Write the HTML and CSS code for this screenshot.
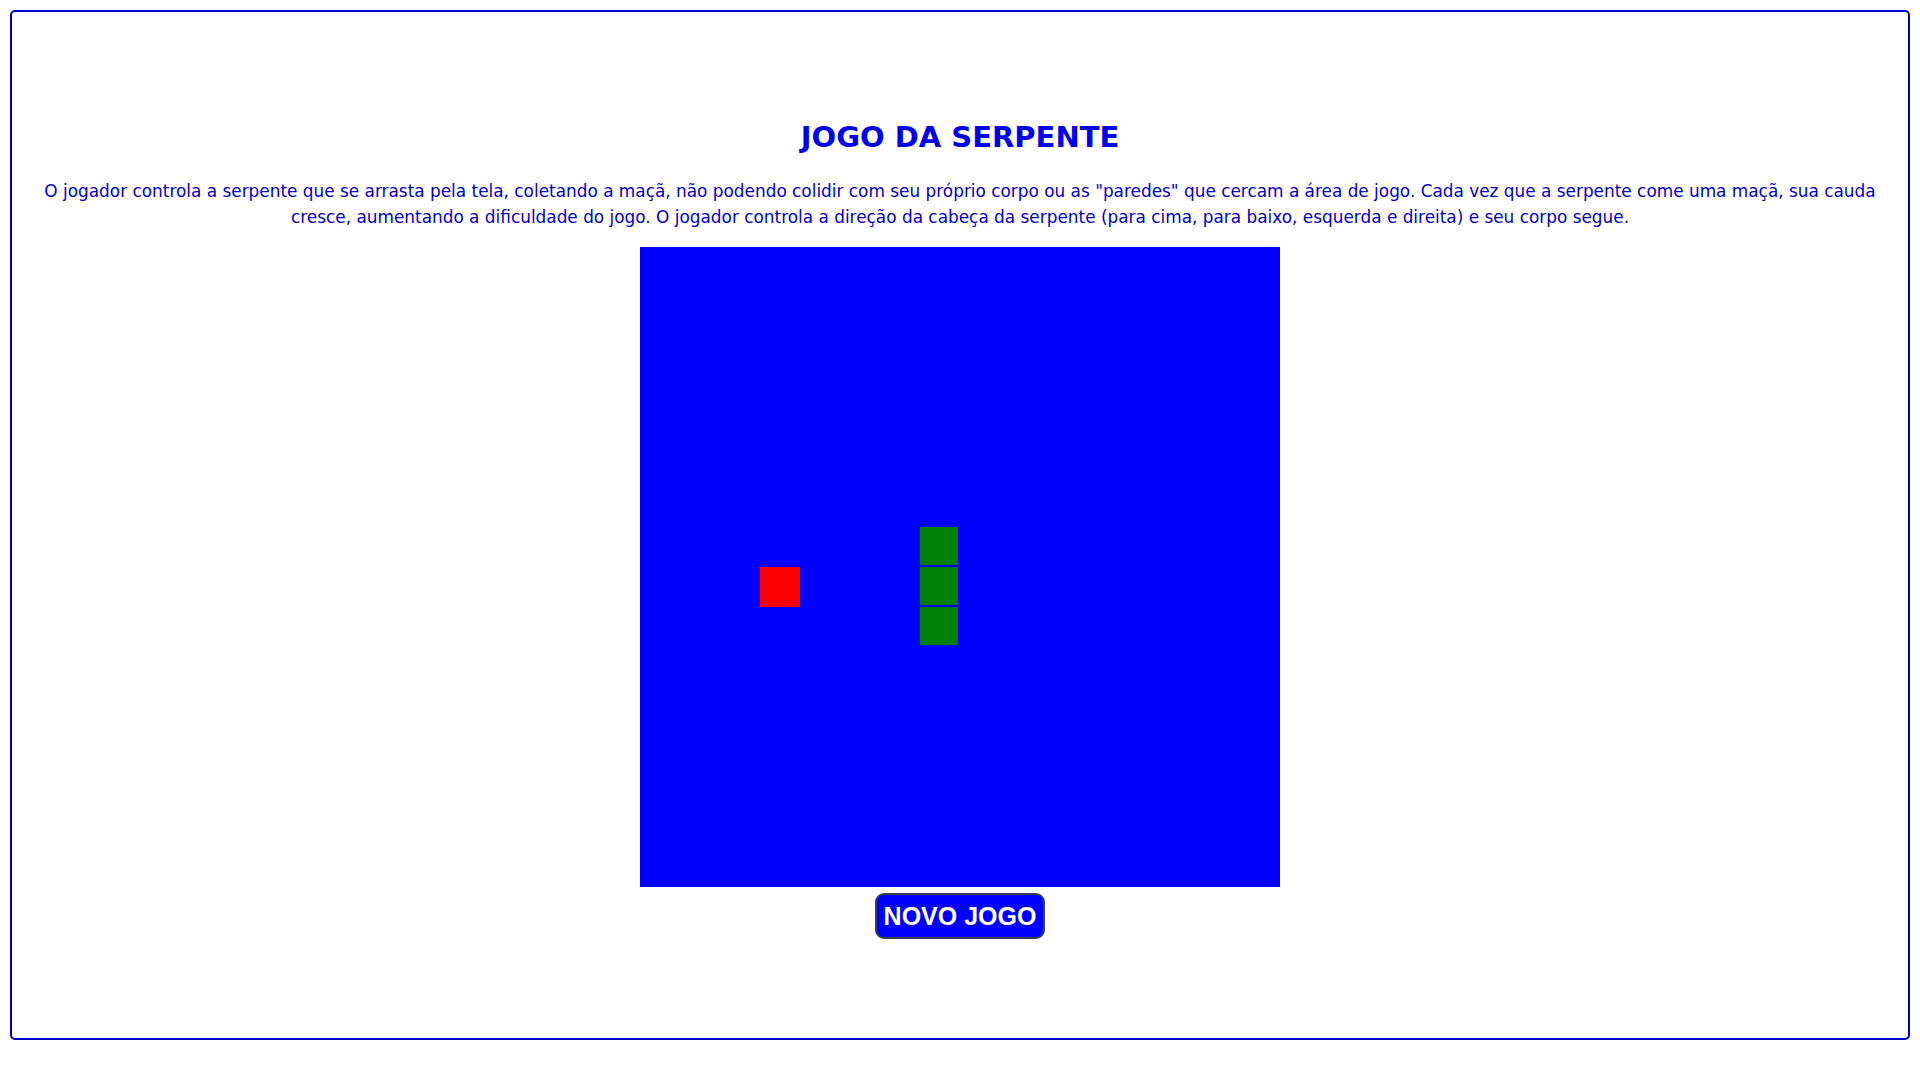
FILE: index.html
```html
<!DOCTYPE html>
<html lang="pt-BR">
<head>
<meta charset="utf-8">
<title>Jogo da Serpente</title>
<link rel="stylesheet" href="styles.css">
</head>
<body>
<div class="frame">
  <h1 class="title">JOGO DA SERPENTE</h1>
  <p class="desc">O jogador controla a serpente que se arrasta pela tela, coletando a maçã, não podendo colidir com seu próprio corpo ou as "paredes" que cercam a área de jogo. Cada vez que a serpente come uma maçã, sua cauda cresce, aumentando a dificuldade do jogo. O jogador controla a direção da cabeça da serpente (para cima, para baixo, esquerda e direita) e seu corpo segue.</p>
  <svg class="board" width="640" height="640" viewBox="0 0 640 640">
    <rect x="0" y="0" width="640" height="640" fill="#0000ff"/>
    <rect x="120" y="320" width="40" height="40" fill="#ff0000"/>
    <rect x="280" y="280" width="38" height="38" fill="#008000"/>
    <rect x="280" y="320" width="38" height="38" fill="#008000"/>
    <rect x="280" y="360" width="38" height="38" fill="#008000"/>
  </svg>
  <button class="btn">NOVO JOGO</button>
</div>
</body>
</html>
```
FILE: styles.css
```css
html, body {
  margin: 0;
  padding: 0;
  background: #ffffff;
}
.frame {
  margin: 10px;
  height: 1030px;
  box-sizing: border-box;
  border: 2px solid #0000cd;
  border-radius: 5px;
  padding-top: 107px;
  display: flex;
  flex-direction: column;
  align-items: center;
  text-align: center;
  color: #0000cd;
  font-family: "Comic Sans MS", "DejaVu Sans", sans-serif;
}
.title {
  margin: 0;
  font-size: 29px;
  line-height: 36px;
  font-weight: bold;
  color: #0000ee;
}
.desc {
  margin: 23px 0 0;
  padding: 0 20px;
  font-size: 16.9px;
  line-height: 26px;
}
.board {
  display: block;
  margin-top: 17px;
  width: 640px;
  height: 640px;
}
.btn {
  margin-top: 6px;
  width: 170px;
  height: 46px;
  padding: 0;
  background: #0000ff;
  color: #ffffff;
  border: 2px solid #3c3c5a;
  border-radius: 9px;
  font-family: "Liberation Sans", Arial, sans-serif;
  font-weight: bold;
  font-size: 25px;
  line-height: 28px;
  cursor: pointer;
}
```
